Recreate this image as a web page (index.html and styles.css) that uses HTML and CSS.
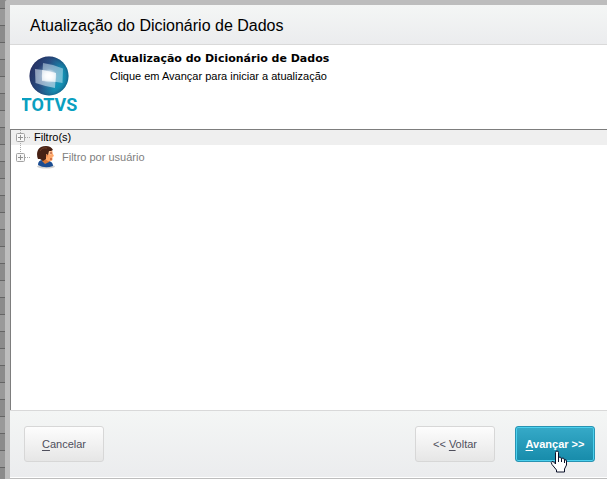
FILE: index.html
```html
<!DOCTYPE html>
<html lang="pt-BR">
<head>
<meta charset="utf-8">
<title>Atualização do Dicionário de Dados</title>
<link rel="stylesheet" href="styles.css">
</head>
<body>
<main class="dialog">
  <header class="titlebar"><h1>Atualização do Dicionário de Dados</h1></header>
  <section class="intro">
    <svg class="logo" width="56" height="58" viewBox="0 0 56 58" role="img" aria-label="TOTVS">
      <defs>
        <linearGradient id="ball" x1="0" y1="0.3" x2="1" y2="0.7">
          <stop offset="0" stop-color="#211c50"/>
          <stop offset="0.4" stop-color="#23437a"/>
          <stop offset="0.75" stop-color="#0b91b4"/>
          <stop offset="1" stop-color="#0899b8"/>
        </linearGradient>
        <radialGradient id="shade" cx="0.48" cy="0.5" r="0.54">
          <stop offset="0.1" stop-color="#c8e2f0" stop-opacity="0.5"/>
          <stop offset="0.65" stop-color="#4b9cc0" stop-opacity="0.1"/>
          <stop offset="1" stop-color="#141b4c" stop-opacity="0.5"/>
        </radialGradient>
        <radialGradient id="glow">
          <stop offset="0" stop-color="#fff"/>
          <stop offset="0.4" stop-color="#fff" stop-opacity="0.8"/>
          <stop offset="1" stop-color="#fff" stop-opacity="0"/>
        </radialGradient>
      </defs>
      <circle cx="27" cy="20" r="19.5" fill="url(#ball)"/>
      <circle cx="27" cy="20" r="19.5" fill="url(#shade)"/>
      <path d="M21 7 Q31 8 41 12.500 L40.500 27 Q30 25 20 24Z" fill="#d5e9f5" fill-opacity="0.5"/>
      <path d="M13 13 Q23 13.500 34 17 L33 32 Q22 30 13.500 27Z" fill="#e3eef8" fill-opacity="0.55"/>
      <path d="M20 14 L34 17 L33.500 26 L20 25Z" fill="#fff" fill-opacity="0.6"/>
      <ellipse cx="27" cy="20" rx="8" ry="7" fill="url(#glow)"/>
      <text class="logo-name" x="27" y="55" text-anchor="middle">TOTVS</text>
    </svg>
    <div class="intro-text">
      <h2>Atualização do Dicionário de Dados</h2>
      <p>Clique em Avançar para iniciar a atualização</p>
    </div>
  </section>
  <section class="tree">
    <div class="row selected">
      <svg class="branch" width="16" height="20" viewBox="0 0 16 20" aria-hidden="true">
        <path class="dots" d="M5.500 0V3M5.500 13V20M10 7.500H16"/>
        <rect class="box" x="1.500" y="3.500" width="8" height="8" rx="1"/>
        <path class="plus" d="M3 7.500H8M5.500 5V10"/>
      </svg>
      <span>Filtro(s)</span>
    </div>
    <div class="row">
      <svg class="branch" width="16" height="20" viewBox="0 0 16 20" aria-hidden="true">
        <path class="dots" d="M5.500 0V8M10 12.500H16"/>
        <rect class="box" x="1.500" y="8.500" width="8" height="8" rx="1"/>
        <path class="plus" d="M3 12.500H8M5.500 10V15"/>
      </svg>
      <svg class="user" width="22" height="24" viewBox="0 0 22 24" aria-hidden="true">
        <ellipse cx="11" cy="21.500" rx="9" ry="2" fill="#000" fill-opacity="0.18"/>
        <path d="M3 20Q3 15 8 15L14 16Q18 17 18 21Q10 24 3 20Z" fill="#1b4d92"/>
        <path d="M8 13L14 14L14 17L10 19L7 16Z" fill="#d97836"/>
        <path d="M9 6L16 4Q18 7 17.500 8L19 11L17.500 12L17.500 15Q16 17 13 16L8 13Z" fill="#ffa769"/>
        <path d="M13 6L16 6L17 8L16 10L13 9Z" fill="#ffc493"/>
        <path d="M3 14Q1 9 3 5Q5 1 11 1Q16 1 18 5L16 6L14 6L13 10L11 9L11 14L8 16L5 14Z" fill="#472114"/>
        <path d="M5 6Q7 2 12 3" fill="none" stroke="#734028"/>
        <path d="M11 10L13 10L12 13Z" fill="#e17e45"/>
        <path d="M15 8H17M15 14H17" stroke="#9d3b24"/>
      </svg>
      <span>Filtro por usuário</span>
    </div>
  </section>
  <footer class="actions">
    <button type="button" accesskey="c"><u>C</u>ancelar</button>
    <button type="button" class="back" accesskey="v">&lt;&lt; <u>V</u>oltar</button>
    <button type="button" class="next" accesskey="a"><u>A</u>vançar &gt;&gt;
      <svg class="cursor" width="18" height="23" viewBox="0 0 18 23" aria-hidden="true">
        <path d="M5.500 14V2.500Q5.500 1 7 1T8.500 2.500V8Q9 7 10 7T11.500 9Q12 8 13 8T14.500 10Q16.500 9 16.500 11V15L14.500 19V22H6.500V20L2 14.500Q0.500 12 2 11.500Q3.500 11 5.500 14Z" fill="#fff" stroke="#0b1028" stroke-linejoin="round"/>
        <path d="M8.500 8V12M11.500 9V12M14.500 10V13" stroke="#0b1028"/>
      </svg>
    </button>
  </footer>
</main>
</body>
</html>
```
FILE: styles.css
```css
* { box-sizing: border-box; }

body {
  margin: 0;
  min-height: 100vh;
  display: flex;
  padding-left: 5px;
  overflow: hidden;
  background: repeating-linear-gradient(#8b8b8b 0 8px, #656565 8px 9px, #999 9px 25px, #656565 25px 26px, #8b8b8b 26px 34px);
  font: 11px/14px "Liberation Sans", Arial, sans-serif;
  color: #000;
}

h1, h2, p { margin: 0; }

.dialog {
  flex: 1;
  display: flex;
  flex-direction: column;
  border: solid #bdbdbd;
  border-width: 5px 0 1px 5px;
  border-top-left-radius: 3px;
  background: #fff;
}

.titlebar {
  height: 40px;
  padding: 2px 20px 0;
  display: flex;
  align-items: center;
  border-bottom: 1px solid #d9d9d9;
  background: linear-gradient(#f4f6f5, #ebecee);
}

.titlebar h1 { font-size: 16px; line-height: 20px; font-weight: 400; }

.intro {
  height: 84px;
  display: flex;
  gap: 32px;
  padding: 7px 12px;
}

.logo { margin-top: 4px; }

.logo-name {
  font: 700 18px Roboto, sans-serif;
  fill: #0a9fc0;
}

.intro h2 {
  font: bold 11px/14px "DejaVu Sans", Verdana, sans-serif;
}

.intro p { margin-top: 3px; }

.tree {
  flex: 1;
  border: solid #7d7d7d;
  border-width: 1px 0 0 1px;
}

.row {
  display: flex;
  align-items: flex-start;
  padding-left: 4px;
  color: #808080;
}

.row.selected { height: 15px; background: #efefef; color: #000; }
.row span { padding-top: 5px; }
.row.selected span { padding: 0 0 0 3px; }
.branch { flex: none; overflow: visible; }
.dots { fill: none; stroke: #aaa; stroke-dasharray: 1 1; }
.box { fill: #f8f8f8; stroke: #a2a2a2; }
.plus { stroke: #929292; }
.user { margin: 0 5px 0 4px; }

.actions {
  height: 68px;
  display: flex;
  align-items: flex-start;
  padding: 15px 12px 0 14px;
  border-top: 1px solid #d9d9d9;
  border-bottom: 1px solid #fff;
  background: linear-gradient(#f4f6f5, #ebecee);
}

button {
  position: relative;
  width: 80px;
  height: 36px;
  padding: 0;
  border: 1px solid #d7d7d7;
  border-radius: 3px;
  background: linear-gradient(#fdfdfd, #e6e6e6);
  font: inherit;
  color: #4f4f5c;
}

u { text-underline-offset: 2px; }
.back { margin-left: auto; }

.next {
  margin-left: 20px;
  border-color: #2893b2;
  box-shadow: inset 0 0 0 1px #4dd0ee;
  background: linear-gradient(#36aac8, #178baa);
  font-weight: bold;
  color: #fff;
}

.cursor { position: absolute; left: 34px; top: 23px; }
```
